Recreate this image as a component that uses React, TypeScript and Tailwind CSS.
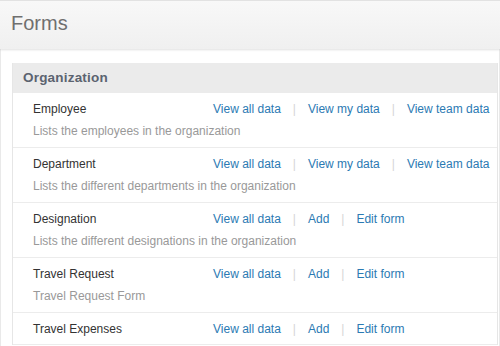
import React from 'react';

type FormRow = {
    name: string;
    description?: string;
    links: string[];
};

const ROWS: FormRow[] = [
    { name: 'Employee', description: 'Lists the employees in the organization', links: ['View all data', 'View my data', 'View team data'] },
    { name: 'Department', description: 'Lists the different departments in the organization', links: ['View all data', 'View my data', 'View team data'] },
    { name: 'Designation', description: 'Lists the different designations in the organization', links: ['View all data', 'Add', 'Edit form'] },
    { name: 'Travel Request', description: 'Travel Request Form', links: ['View all data', 'Add', 'Edit form'] },
    { name: 'Travel Expenses', links: ['View all data', 'Add', 'Edit form'] },
];

const Row: React.FC<{ row: FormRow }> = ({ row }) => (
    <div className="flex border-b border-[#ececec] pl-[20px] pt-[8px] pb-[7px]">
        <div className="w-[180px] shrink-0">
            <div className="text-[12px] leading-[16px] text-[#333]">{row.name}</div>
            {row.description && (
                <div className="mt-[6px] mb-[1px] text-[12px] leading-[16px] text-[#999] whitespace-nowrap">{row.description}</div>
            )}
        </div>
        <div className="flex items-start text-[12px] leading-[16px] whitespace-nowrap">
            {row.links.map((link, i) => (
                <React.Fragment key={link}>
                    {i > 0 && <span className="mx-[12px] text-[#d6d6d6]">|</span>}
                    <a href="#" className="text-[#2b7ab3]">{link}</a>
                </React.Fragment>
            ))}
        </div>
    </div>
);

const App: React.FC = () => {
    return (
        <div className="h-[346px] overflow-hidden bg-white font-['Liberation_Sans',Arial,sans-serif]">
            <header className="relative z-10 h-[49px] border-t border-[#e2e2e2] bg-gradient-to-b from-[#f8f8f8] to-[#f0f0f0] shadow-[0_1px_2px_rgba(0,0,0,0.12)] pl-[11px]">
                <h1 className="pt-[10px] text-[20px] leading-[24px] text-[#6f6f6f]">Forms</h1>
            </header>

            <div className="h-full border-l border-r border-[#e9e9e9] pl-[11px] pr-[1px] pt-[14px]">
                <section className="border-l border-r border-[#e6e6e6]">
                    <div className="h-[30px] bg-[#ebebeb] pl-[10px] flex items-center">
                        <h2 className="text-[13.5px] font-bold text-[#5b6370] tracking-[0.2px]">Organization</h2>
                    </div>
                    {ROWS.map(row => (
                        <Row key={row.name} row={row} />
                    ))}
                </section>
            </div>
        </div>
    );
};

export default App;
